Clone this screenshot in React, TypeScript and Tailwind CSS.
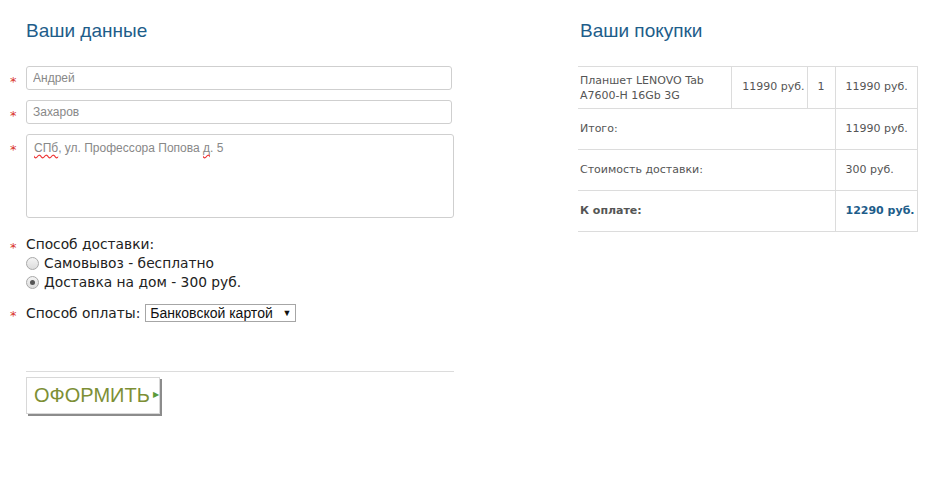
import { ReactNode } from "react";

const heading = "text-[19px] leading-[22px] text-[#1e5d8a] font-['Liberation_Sans',Arial,sans-serif]";
const verdana = "font-['DejaVu_Sans',Verdana,sans-serif]";

const Star = ({ className = "" }: { className?: string }) => (
  <span className={`w-[16px] shrink-0 text-[13px] leading-none text-[#d9342b] ${verdana} ${className}`}>*</span>
);

const Field = ({ children, star = "pt-[9px]" }: { children: ReactNode; star?: string }) => (
  <div className="flex items-start">
    <Star className={star} />
    {children}
  </div>
);

const Radio = ({ checked = false }: { checked?: boolean }) => (
  <span className="w-[13px] h-[13px] rounded-full border border-[#a8a8a8] bg-gradient-to-b from-[#f4f4f4] to-[#dcdcdc] flex items-center justify-center mr-[5px]">
    {checked && <span className="w-[5px] h-[5px] rounded-full bg-[#555]" />}
  </span>
);

const rows = [
  { label: "Итого:", value: "11990 руб." },
  { label: "Стоимость доставки:", value: "300 руб." },
];

export default function App() {
  return (
    <div className={`min-h-[498px] w-[930px] bg-white flex pt-[20px] text-[#333] ${verdana}`}>
      {/* left: customer form */}
      <div className="w-[444px] ml-[10px]">
        <h2 className={`${heading} ml-[16px]`}>Ваши данные</h2>

        <div className="mt-[24px] flex flex-col gap-[10px]">
          <Field>
            <input
              defaultValue="Андрей"
              className="w-[426px] h-[24px] border border-[#cfcfcf] rounded-[3px] px-[6px] text-[12px] text-[#888] font-['Liberation_Sans',Arial,sans-serif] outline-none"
            />
          </Field>
          <Field>
            <input
              defaultValue="Захаров"
              className="w-[426px] h-[24px] border border-[#cfcfcf] rounded-[3px] px-[6px] text-[12px] text-[#888] font-['Liberation_Sans',Arial,sans-serif] outline-none"
            />
          </Field>
          <Field>
            <div className="w-[428px] h-[84px] border border-[#cfcfcf] rounded-[3px] px-[7px] pt-[4px] text-[12px] text-[#888] font-['Liberation_Sans',Arial,sans-serif]">
              <span className="underline decoration-wavy decoration-[#e33] underline-offset-2">СПб</span>, ул. Профессора Попова{" "}
              <span className="underline decoration-wavy decoration-[#e33] underline-offset-2">д</span>. 5
            </div>
          </Field>
        </div>

        <div className="mt-[17px] text-[13.8px] leading-[19px] text-[#222]">
          <Field star="pt-[6px]">
            <span>Способ доставки:</span>
          </Field>
          <div className="ml-[16px] flex items-center">
            <Radio />
            Самовывоз - бесплатно
          </div>
          <div className="ml-[16px] flex items-center">
            <Radio checked />
            Доставка на дом - 300 руб.
          </div>
        </div>

        <div className="mt-[11px] flex items-center text-[13.8px] text-[#222]">
          <Star className="pt-[4px]" />
          <span>Способ оплаты:</span>
          <div className="ml-[5px] w-[151px] h-[18px] border border-[#a6a6a6] flex items-center justify-between px-[4px] text-[14px] text-[#111] font-['Liberation_Sans',Arial,sans-serif]">
            <span>Банковской картой</span>
            <span className="text-[9px]">▼</span>
          </div>
        </div>

        <div className="ml-[16px] mt-[47px] w-[428px] border-t border-[#dcdcdc]" />

        <button className="ml-[16px] mt-[5px] h-[37px] w-[134px] flex items-center border border-[#d8d8d8] shadow-[2px_2px_0_#8c8c8c] bg-white pl-[7px] text-[20px] text-[#7d8f35] font-['Liberation_Sans',Arial,sans-serif]">
          ОФОРМИТЬ
          <span className="ml-[3px] text-[8px] text-[#5a9a3a]">▶</span>
        </button>
      </div>

      {/* right: order summary */}
      <div className="ml-[124px] w-[340px]">
        <h2 className={`${heading} ml-[2px]`}>Ваши покупки</h2>
        <table className="mt-[24px] w-[340px] border-collapse text-[11px] text-[#555]">
          <tbody>
            <tr className="h-[42px] border-y border-[#dcdcdc]">
              <td className="w-[153px] pl-[2px] leading-[15px] border-r border-[#dcdcdc]">
                Планшет LENOVO Tab
                <br />
                A7600-H 16Gb 3G
              </td>
              <td className="w-[76px] text-right pr-[2px] border-r border-[#dcdcdc]">11990 руб.</td>
              <td className="w-[28px] text-center border-r border-[#dcdcdc]">1</td>
              <td className="pl-[10px] border-r border-[#dcdcdc]">11990 руб.</td>
            </tr>
            {rows.map((r) => (
              <tr key={r.label} className="h-[41px] border-b border-[#dcdcdc]">
                <td colSpan={3} className="pl-[2px] border-r border-[#dcdcdc]">
                  {r.label}
                </td>
                <td className="pl-[10px] border-r border-[#dcdcdc]">{r.value}</td>
              </tr>
            ))}
            <tr className="h-[41px] border-b border-[#dcdcdc]">
              <td colSpan={3} className="pl-[2px] font-bold border-r border-[#dcdcdc]">
                К оплате:
              </td>
              <td className="pl-[10px] font-bold text-[#1e5d8a] border-r border-[#dcdcdc]">12290 руб.</td>
            </tr>
          </tbody>
        </table>
      </div>
    </div>
  );
}
